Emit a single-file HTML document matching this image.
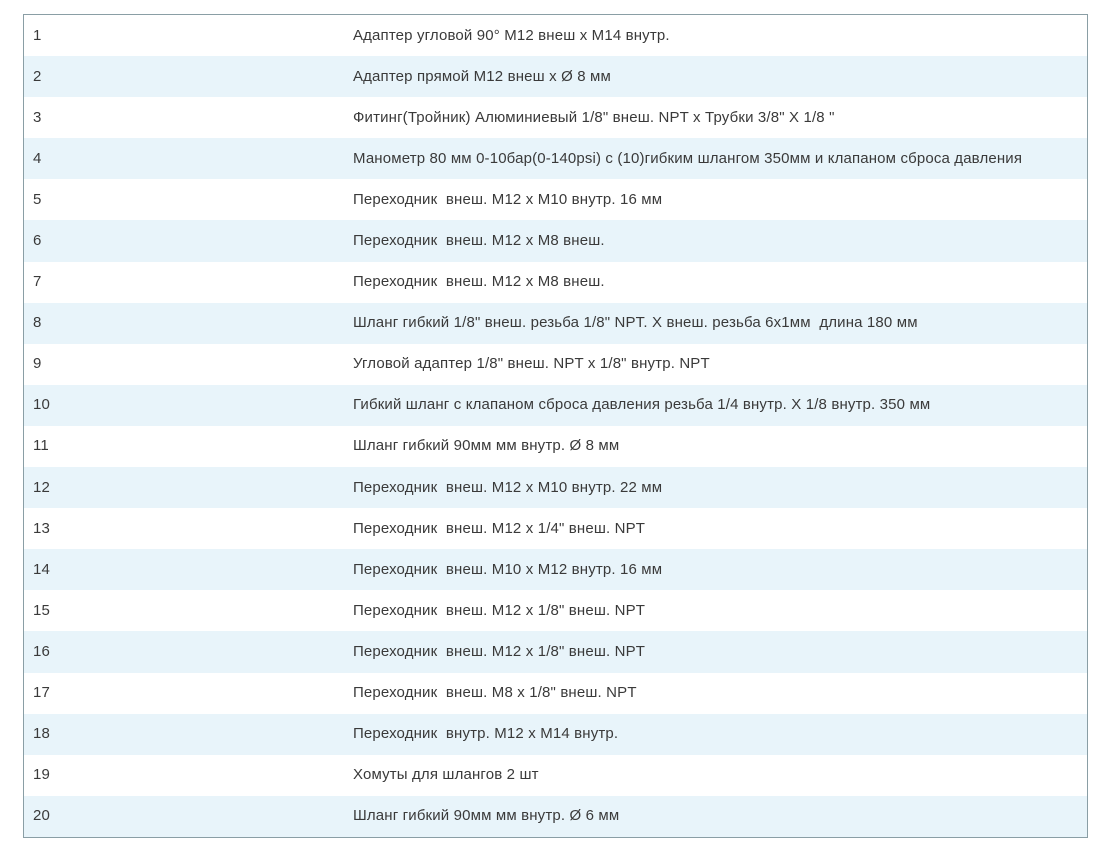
<!DOCTYPE html>
<html><head><meta charset="utf-8"><style>
html,body{margin:0;padding:0;background:#fff;width:1109px;height:861px;overflow:hidden}
table{position:absolute;left:23px;top:14px;width:1065px;border-collapse:collapse;border:1px solid #8a9ea5;font-family:"Liberation Sans",sans-serif;font-size:15px;line-height:16px;letter-spacing:0.15px;color:#3a3a3a}
td{height:41.1px;padding:0;vertical-align:middle}
td span{position:relative;top:-1px}
td.n{padding-left:9px;width:320px}
tr:nth-child(even){background:#e8f4fa}
</style></head><body>
<table>
<tr><td class="n">1</td><td>Адаптер угловой 90° M12 внеш х M14 внутр.</td></tr>
<tr><td class="n">2</td><td>Адаптер прямой M12 внеш х Ø 8 мм</td></tr>
<tr><td class="n">3</td><td>Фитинг(Тройник) Алюминиевый 1/8" внеш. NPT x Трубки 3/8" X 1/8 "</td></tr>
<tr><td class="n">4</td><td>Манометр 80 мм 0-10бар(0-140psi) с (10)гибким шлангом 350мм и клапаном сброса давления</td></tr>
<tr><td class="n">5</td><td>Переходник&nbsp; внеш. M12 x M10 внутр. 16 мм</td></tr>
<tr><td class="n">6</td><td>Переходник&nbsp; внеш. M12 x M8 внеш.</td></tr>
<tr><td class="n">7</td><td>Переходник&nbsp; внеш. M12 x M8 внеш.</td></tr>
<tr><td class="n">8</td><td>Шланг гибкий 1/8" внеш. резьба 1/8" NPT. X внеш. резьба 6x1мм&nbsp; длина 180 мм</td></tr>
<tr><td class="n">9</td><td>Угловой адаптер 1/8" внеш. NPT x 1/8" внутр. NPT</td></tr>
<tr><td class="n">10</td><td>Гибкий шланг с клапаном сброса давления резьба 1/4 внутр. X 1/8 внутр. 350 мм</td></tr>
<tr><td class="n">11</td><td>Шланг гибкий 90мм мм внутр. Ø 8 мм</td></tr>
<tr><td class="n">12</td><td>Переходник&nbsp; внеш. M12 x M10 внутр. 22 мм</td></tr>
<tr><td class="n">13</td><td>Переходник&nbsp; внеш. M12 x 1/4" внеш. NPT</td></tr>
<tr><td class="n">14</td><td>Переходник&nbsp; внеш. M10 x M12 внутр. 16 мм</td></tr>
<tr><td class="n">15</td><td>Переходник&nbsp; внеш. M12 x 1/8" внеш. NPT</td></tr>
<tr><td class="n">16</td><td>Переходник&nbsp; внеш. M12 x 1/8" внеш. NPT</td></tr>
<tr><td class="n">17</td><td>Переходник&nbsp; внеш. M8 x 1/8" внеш. NPT</td></tr>
<tr><td class="n">18</td><td>Переходник&nbsp; внутр. M12 x M14 внутр.</td></tr>
<tr><td class="n">19</td><td>Хомуты для шлангов 2 шт</td></tr>
<tr><td class="n">20</td><td>Шланг гибкий 90мм мм внутр. Ø 6 мм</td></tr>
</table>
</body></html>
